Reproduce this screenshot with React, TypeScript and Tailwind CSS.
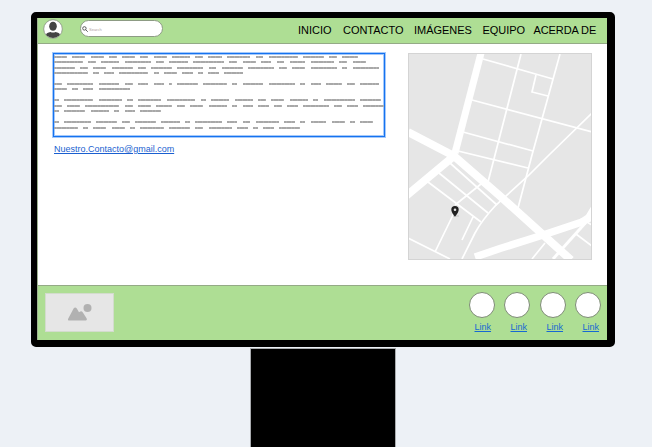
const paragraphs: { gap: string; words: number[] }[] = [
  { gap: 'mt-0', words: [5, 5, 5, 3, 5, 3, 5, 7, 3, 5, 9, 3, 11, 8, 3, 6] },
  { gap: 'mt-[3px]', words: [11, 3, 7, 10, 3, 7, 12, 3, 5, 4, 3, 6, 9, 3, 5] },
  { gap: 'mt-[4px]', words: [8, 3, 5, 8, 3, 8, 10, 3, 8, 10, 3, 5, 10, 2, 10] },
  { gap: 'mt-[3px]', words: [13, 2, 4, 11, 2, 5, 4, 2, 4, 7] },
  { gap: 'mt-[9px]', words: [3, 10, 8, 3, 4, 4, 1, 8, 9, 2, 8, 10, 2, 4, 6, 3, 7] },
  { gap: 'mt-[3px]', words: [5, 2, 4, 12] },
  { gap: 'mt-[9px]', words: [2, 11, 9, 2, 9, 11, 2, 7, 7, 3, 5, 7, 2, 12, 8] },
  { gap: 'mt-[4px]', words: [3, 5, 13, 3, 5, 6, 3, 5, 7, 2, 4, 4, 3, 4, 10, 3, 4, 8] },
  { gap: 'mt-[3px]', words: [2, 8, 7, 2, 4, 8] },
  { gap: 'mt-[9px]', words: [2, 10, 8, 3, 8, 7, 2, 10, 4, 3, 9, 4, 2, 6, 5, 2, 5] },
  { gap: 'mt-[4px]', words: [9, 2, 5, 5, 2, 9, 8, 3, 9, 4, 2, 4, 8] },
];

const LETTER = 2.62;

function TextBlock() {
  return (
    <div className="h-[84px] w-[332px] border border-[#1573f0] pt-[2px] shadow-[0_0_0_1px_#a5c9fa,inset_0_0_0_1px_#a5c9fa]">
      {paragraphs.map((line, i) => (
        <div key={i} className={`flex h-0.5 gap-[5.24px] ${line.gap}`}>
          {line.words.map((n, j) => (
            <span
              key={j}
              className="h-0.5 shrink-0 bg-[repeating-linear-gradient(90deg,#a8a8a8_0,#a8a8a8_2px,#b3b3b3_2px,#b3b3b3_2.62px)]"
              style={{ width: n * LETTER }}
            />
          ))}
        </div>
      ))}
    </div>
  );
}

function StreetMap() {
  return (
    <svg className="block h-[207px] w-[184px]" viewBox="0 0 184 207">
      <rect width="184" height="207" fill="#e6e6e6" />
      <g fill="none" stroke="#fff" strokeWidth="1.7">
        <path d="M75 6 145 26M64 47 184 79M55 79 125 98M50 98 120 115" />
        <path d="M113 1 87 102 80 129M152 1 124 102 110 155M128 22 124 39 140 43" />
        <path d="M184 60 141 102 120 123 88 152Q74 167 67 180L54 206" />
        <path d="M20 129 73 169M31 120 80 160M42 110 89 152M73 131 47 152M46 160 27 199M0 185 42 206M65 164 54 187" />
        <path d="M137 190 124 206M168 181 184 193M177 168 184 172" />
      </g>
      <g fill="none" stroke="#fff">
        <path d="M180 167 145 206" strokeWidth="3" />
        <path d="M73 0 47 100" strokeWidth="7" />
        <path d="M0 79 46 103" strokeWidth="8" />
        <path d="M-2 143 46 103 92 143 163 207" strokeWidth="8" strokeLinejoin="round" />
        <path d="M67 204 92 195.500 135 182 177 168" strokeWidth="7.500" />
      </g>
      <path d="M172 166 178 162 184 152V168L176 171.500Z" fill="#fff" />
      <rect x=".5" y=".5" width="183" height="206" fill="none" stroke="#d4d4d4" />
      <path d="M45 163h6" stroke="#c4c4c4" />
      <path
        d="M47 153a3.700 3.700 0 0 0-3.700 3.700c0 2.700 3.700 7 3.700 7s3.700-4.300 3.700-7A3.700 3.700 0 0 0 47 153Zm0 2.500a1.300 1.300 0 1 1 0 2.600 1.300 1.300 0 0 1 0-2.600Z"
        fill="#222"
        fillRule="evenodd"
      />
    </svg>
  );
}

function Avatar() {
  return (
    <svg className="block size-5" viewBox="0 0 20 20">
      <defs>
        <clipPath id="avatar">
          <circle cx="10" cy="10" r="9" />
        </clipPath>
      </defs>
      <circle cx="10" cy="10" r="9.300" fill="#fff" stroke="#858d80" strokeWidth=".8" />
      <g fill="#444" clipPath="url(#avatar)">
        <ellipse cx="10" cy="7.300" rx="3.800" ry="4.500" />
        <path d="M3 19v-3.500Q3.500 13.600 7.500 12.900q2.500 1.200 5 0 4 .7 4.500 2.600V19Z" />
      </g>
    </svg>
  );
}

function Header() {
  return (
    <header className="flex h-[26px] items-start border-b border-[#94aa86] bg-[#aede94]">
      <div className="ml-[5px] mt-px">
        <Avatar />
      </div>
      <div className="ml-[17px] mt-[2px] flex h-[17px] w-[83px] items-center rounded-full border border-[#8d9b84] bg-white pl-px">
        <svg className="size-[6px]" viewBox="0 0 5 5" fill="none" stroke="#444" strokeWidth=".7">
          <circle cx="2" cy="2" r="1.450" />
          <path d="m3 3 1.800 1.800" />
        </svg>
        <span className="ml-px pt-px text-[4px] leading-[5px] text-[#b09f9f]">Search</span>
      </div>
      <nav className="mt-[5px] flex whitespace-nowrap text-[11px] leading-[14px] tracking-[-0.03px] text-black">
        <a className="ml-[135px] w-[45px]">INICIO</a>
        <a className="w-[71px]">CONTACTO</a>
        <a className="w-[68.500px]">IMÁGENES</a>
        <a className="w-[51px]">EQUIPO</a>
        <a className="tracking-[-0.1px]">ACERDA DE</a>
      </nav>
    </header>
  );
}

function Footer() {
  return (
    <footer className="flex h-[55px] items-start justify-between border-t border-[#94aa86] bg-[#aede94]">
      <div className="ml-[7px] mt-[7px] h-[39px] w-[69px] border border-[#d3dccd] bg-[#e6e6e6]">
        <svg className="block h-[37px] w-[67px]" viewBox="0 0 67 37" fill="#b1b1b1">
          <circle cx="41.500" cy="14" r="4" />
          <path d="M22.300 24.500 27.600 14.600q1.600-2.400 3.200 0l2.200 3.600 1.300-.8q1.400-.5 2.400.8l4 6.300q.8 2-1 2.100H23.300q-2-.1-1-2.100Z" />
        </svg>
      </div>
      <div className="mr-[6px] mt-[6px] flex gap-[9.500px]">
        {['ml-[6px]', 'ml-[6.500px]', 'ml-[7px]', 'ml-[7.500px]'].map((offset) => (
          <div key={offset} className="w-[26px]">
            <div className="size-[26px] rounded-full border border-[#7e8b76] bg-white" />
            <a className={`mt-[4px] block whitespace-nowrap text-[9px] leading-[11px] text-[#1769d2] underline ${offset}`}>Link</a>
          </div>
        ))}
      </div>
    </footer>
  );
}

export default function App() {
  return (
    <div className="flex h-[447px] w-[652px] flex-col items-start overflow-hidden bg-[#edf1f6] pl-[31px] pt-[12px] font-['Liberation_Sans',Arial,sans-serif]">
      <div className="h-[335px] w-[584px] shrink-0 rounded-[5px] border-[6px] border-r-[8px] border-black border-b-[7px] bg-[#9fb391] pl-px">
        <Header />
        <main className="flex h-[241px] justify-between bg-white pl-[15px] pr-[15px] pt-[9px]">
          <div>
            <TextBlock />
            <a className="ml-px mt-[7px] block text-[9px] leading-[11px] text-[#1a5fd0] underline">Nuestro.Contacto@gmail.com</a>
          </div>
          <StreetMap />
        </main>
        <Footer />
      </div>
      <div className="ml-[219px] mt-[1px] h-[100px] w-[146px] shrink-0 border border-b-0 border-[#a9acaf] bg-black" />
    </div>
  );
}
